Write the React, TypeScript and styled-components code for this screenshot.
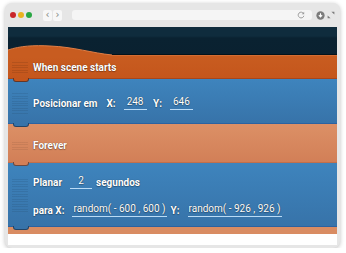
import React from 'react';
import styled, { createGlobalStyle } from 'styled-components';

const GlobalStyle = createGlobalStyle`
  body {
    margin: 0;
    background: #ffffff;
    font-family: Roboto, "Liberation Sans", sans-serif;
  }
`

const BLOCKS = {
  orange: { top: '#c85c20', bottom: '#c4561c', edge: '#a9461a', stripe: 'rgba(0,0,0,0.1)' },
  blue: { top: '#3e84bd', bottom: '#3773a9', edge: '#2c62a0', stripe: 'rgba(0,0,0,0.08)' },
  salmon: { top: '#dc9066', bottom: '#d27f57', edge: '#c06f4c', stripe: 'rgba(0,0,0,0.07)' },
}

type Kind = keyof typeof BLOCKS

const Window = styled.div`
  margin: 3px 0 0 5px;
  width: 329px;
  height: 242px;
  padding: 0 3px 3px;
  border-radius: 7px;
  background: #e6e6e6;
  box-shadow: 0 1px 4px rgba(0, 0, 0, 0.25);
  display: flex;
  flex-direction: column;
  overflow: hidden;
`

const TitleBar = styled.div`
  height: 24px;
  display: flex;
  align-items: center;
  padding: 0 2px;
`

const Lights = styled.div`
  display: flex;
  gap: 2px;
`

const Light = styled.span<{ $color: string }>`
  width: 6px;
  height: 6px;
  border-radius: 50%;
  background: ${p => p.$color};
`

const NavGroup = styled.div`
  margin-left: 11px;
  display: flex;
  gap: 1px;
`

const NavButton = styled.span`
  width: 9px;
  height: 11px;
  border-radius: 2px;
  background: #f7f7f7;
  color: #858585;
  font-size: 10px;
  line-height: 10px;
  text-align: center;
  font-family: "DejaVu Sans", sans-serif;
`

const Address = styled.div`
  margin-left: 10px;
  width: 242px;
  height: 10px;
  border-radius: 3px;
  background: #f5f5f5;
  display: flex;
  justify-content: flex-end;
  align-items: center;
  padding-right: 7px;
  box-sizing: border-box;
`

const Tools = styled.div`
  margin-left: 4px;
  display: flex;
  align-items: center;
  gap: 2px;
`

const Viewport = styled.div`
  flex: 1;
  background: #ffffff;
  display: flex;
  flex-direction: column;
`

const Header = styled.div`
  height: 30px;
  background: linear-gradient(#0f2c3d 0, #0f2c3d 9px, #0a2231 11px, #0a2130 100%);
  display: flex;
  align-items: flex-end;
`

const Block = styled.div<{ $kind: Kind; $height: number; $top?: number }>`
  position: relative;
  height: ${p => p.$height}px;
  box-sizing: border-box;
  padding: ${p => p.$top ?? 0}px 0 0 4px;
  background: linear-gradient(${p => BLOCKS[p.$kind].top}, ${p => BLOCKS[p.$kind].bottom});
  border-bottom: 1px solid ${p => BLOCKS[p.$kind].edge};
  display: flex;
  align-items: center;
  gap: 5px;
  color: #ffffff;
  font-weight: 700;
  font-size: 10px;
  text-shadow: 0 0 1px rgba(0, 0, 0, 0.55), 0 1px 1px rgba(0, 0, 0, 0.25);
`

const Handle = styled.div<{ $kind: Kind; $height: number }>`
  width: 16px;
  height: ${p => p.$height}px;
  flex-shrink: 0;
  background: repeating-linear-gradient(
    ${p => BLOCKS[p.$kind].stripe} 0,
    ${p => BLOCKS[p.$kind].stripe} 1px,
    transparent 1px,
    transparent 2.5px
  );
`

const Notch = styled.div<{ $kind: Kind }>`
  position: absolute;
  left: 5px;
  bottom: -4px;
  width: 14px;
  height: 3px;
  background: ${p => BLOCKS[p.$kind].bottom};
  border: 1px solid rgba(20, 30, 50, 0.55);
  border-top: none;
  border-radius: 0 0 3px 3px;
  z-index: 2;
`

const Lines = styled.div`
  display: flex;
  flex-direction: column;
  gap: 14px;
`

const Line = styled.div`
  display: flex;
  align-items: center;
  gap: 4px;
  white-space: pre;
`

const Field = styled.span<{ $width?: number }>`
  display: inline-block;
  min-width: ${p => p.$width ?? 0}px;
  margin-left: 4px;
  padding: 0 ${p => (p.$width ? 3 : 1)}px 2px;
  text-align: center;
  font-weight: 400;
  border-bottom: 1px solid #b9dbf6;
`

const Strip = styled.div`
  position: relative;
  height: 7px;
  background: #d98c62;
`

const Wave = () => (
  <svg width="329" height="12" viewBox="0 0 329 12" style={{ display: 'block' }}>
    <path d="M0,12 L0,5 C12,1 26,0 42,1 C66,2 84,8 104,10 L329,10 L329,12 Z" fill="#c85c20" />
    <path d="M0,5 C12,1 26,0 42,1 C66,2 84,8 104,10 L329,10" fill="none" stroke="#e07e45" strokeWidth="1" />
    <path d="M104,9.5 L329,9.5" stroke="#05121a" strokeWidth="1" />
  </svg>
)

const Reload = () => (
  <svg width="8" height="8" viewBox="0 0 10 10">
    <path d="M8.2,3.2 A3.6,3.6 0 1 0 8.6,6" fill="none" stroke="#9a9a9a" strokeWidth="1.2" />
    <path d="M9,0.8 L9,4 L5.8,4 Z" fill="#9a9a9a" />
  </svg>
)

const Download = () => (
  <svg width="9" height="9" viewBox="0 0 10 10">
    <circle cx="5" cy="5" r="4.6" fill="#7b7b7b" />
    <path d="M5,2.4 L5,6 M3.2,4.6 L5,6.6 L6.8,4.6" stroke="#fff" strokeWidth="1.2" fill="none" />
  </svg>
)

const Expand = () => (
  <svg width="8" height="8" viewBox="0 0 10 10">
    <path d="M5.5,0.8 L9.2,0.8 L9.2,4.5 Z" fill="#7b7b7b" />
    <path d="M0.8,5.5 L0.8,9.2 L4.5,9.2 Z" fill="#7b7b7b" />
  </svg>
)

export default function App() {
  return (
    <>
      <GlobalStyle />
      <Window>
        <TitleBar>
          <Lights>
            <Light $color="#c9262a" />
            <Light $color="#e9b21f" />
            <Light $color="#28a642" />
          </Lights>
          <NavGroup>
            <NavButton>‹</NavButton>
            <NavButton>›</NavButton>
          </NavGroup>
          <Address>
            <Reload />
          </Address>
          <Tools>
            <Download />
            <Expand />
          </Tools>
        </TitleBar>
        <Viewport>
          <Header>
            <Wave />
          </Header>
          <Block $kind="orange" $height={22}>
            <Handle $kind="orange" $height={12} />
            When scene starts
            <Notch $kind="orange" />
          </Block>
          <Block $kind="blue" $height={45} $top={4}>
            <Handle $kind="blue" $height={21} />
            <Line>
              Posicionar em <span> X:</span>
              <Field $width={15}>248</Field>
              <span> Y:</span>
              <Field $width={15}>646</Field>
            </Line>
            <Notch $kind="blue" />
          </Block>
          <Block $kind="salmon" $height={39} $top={5}>
            <Handle $kind="salmon" $height={8} />
            Forever
            <Notch $kind="salmon" />
          </Block>
          <Block $kind="blue" $height={64} $top={3}>
            <Handle $kind="blue" $height={35} />
            <Lines>
              <Line>
                Planar<Field $width={16}>2</Field>segundos
              </Line>
              <Line>
                para X:<Field>random( - 600 , 600 )</Field>Y:<Field>random( - 926 , 926 )</Field>
              </Line>
            </Lines>
            <Notch $kind="blue" />
          </Block>
          <Strip />
        </Viewport>
      </Window>
    </>
  );
}
